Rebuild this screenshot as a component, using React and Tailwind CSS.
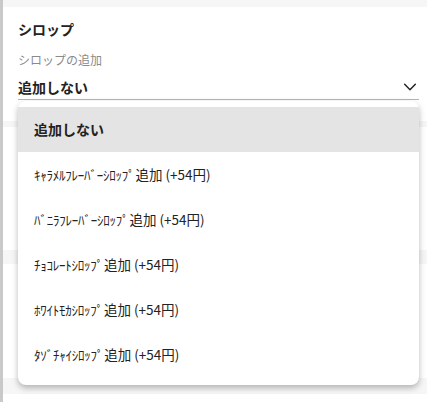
import React from 'react'

const options = [
    'ｷｬﾗﾒﾙﾌﾚｰﾊﾞｰｼﾛｯﾌﾟ',
    'ﾊﾞﾆﾗﾌﾚｰﾊﾞｰｼﾛｯﾌﾟ',
    'ﾁｮｺﾚｰﾄｼﾛｯﾌﾟ',
    'ﾎﾜｲﾄﾓｶｼﾛｯﾌﾟ',
    'ﾀｿﾞﾁｬｲｼﾛｯﾌﾟ',
]

const App = () => {
    return (
        <div className="relative w-[427px] h-[402px] overflow-hidden bg-white flex font-['Noto_Sans_CJK_JP','Noto_Sans',sans-serif] text-[#222]">
            <div className="w-[3px] bg-[#c9c9c9]"></div>
            <div className="flex-1 flex flex-col">
                <div className="h-[7px] bg-[#f6f6f6]"></div>
                <div className="pl-[15px] pr-[8px] pt-[12px]">
                    <h2 className="text-[14px] font-bold leading-[20px]">シロップ</h2>
                    <div className="mt-[13px] text-[12px] leading-[16px] text-[#8a8a8a]">シロップの追加</div>
                    <div className="mt-[8px] flex items-center justify-between border-b border-[#b5b5b5] h-[24px] pb-[1px]">
                        <span className="text-[14px] font-bold">追加しない</span>
                        <svg width="16" height="16" viewBox="0 0 24 24" fill="none" stroke="#222" strokeWidth="2.2" strokeLinecap="round" strokeLinejoin="round" className="mr-[1px]">
                            <polyline points="4 8 12 16 20 8" />
                        </svg>
                    </div>
                </div>
                <div className="h-[21px]"></div>
                <div className="h-[6px] bg-[#f6f6f6]"></div>
                <div className="h-[123px]"></div>
                <div className="h-[14px] bg-[#f6f6f6]"></div>
                <div className="h-[114px]"></div>
                <div className="h-[16px] bg-[#f6f6f6]"></div>
                <div className="flex-1"></div>
            </div>

            <div className="absolute left-[18px] top-[101px] w-[401px] bg-white rounded-[8px] pt-[6px] pb-[8px] shadow-[0_3px_6px_rgba(0,0,0,0.28)]">
                <div className="h-[45px] flex items-center px-[16px] bg-[#e4e4e4] text-[14px] font-bold">追加しない</div>
                {options.map((name, index) => (
                    <div key={index} className="h-[45px] flex items-center px-[16px] text-[13.5px] text-[#222]">
                        <span className="text-[13px] tracking-[-0.25px]">{name}</span>
                        <span className="ml-[1px]">追加 (+54円)</span>
                    </div>
                ))}
            </div>
        </div>
    )
}

export default App
